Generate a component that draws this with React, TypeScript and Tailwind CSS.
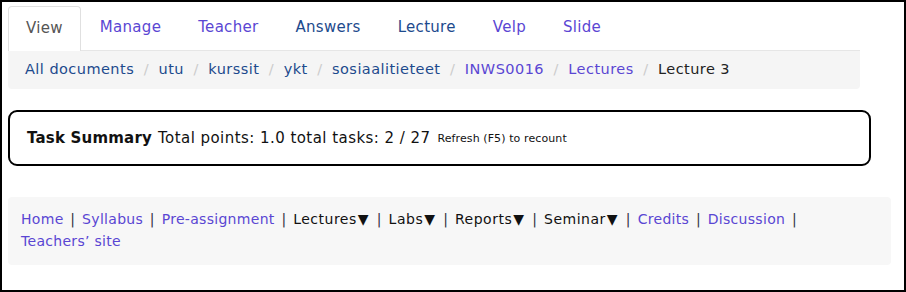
const PURPLE = "text-[#5a46d3]";
const BLUE = "text-[#1d4a8d]";

const TABS: { label: string; color: string }[] = [
  { label: "Manage", color: PURPLE },
  { label: "Teacher", color: PURPLE },
  { label: "Answers", color: BLUE },
  { label: "Lecture", color: BLUE },
  { label: "Velp", color: PURPLE },
  { label: "Slide", color: PURPLE },
];

const CRUMBS: { label: string; color: string }[] = [
  { label: "All documents", color: BLUE },
  { label: "utu", color: BLUE },
  { label: "kurssit", color: BLUE },
  { label: "ykt", color: BLUE },
  { label: "sosiaalitieteet", color: BLUE },
  { label: "INWS0016", color: PURPLE },
  { label: "Lectures", color: PURPLE },
];

type NavItem = { label: string; link: boolean };

const NAV: NavItem[] = [
  { label: "Home", link: true },
  { label: "Syllabus", link: true },
  { label: "Pre-assignment", link: true },
  { label: "Lectures", link: false },
  { label: "Labs", link: false },
  { label: "Reports", link: false },
  { label: "Seminar", link: false },
  { label: "Credits", link: true },
  { label: "Discussion", link: true },
];

export default function App() {
  return (
    <div className="w-[906px] h-[292px] box-border border-2 border-black bg-white pl-[6px] pt-[1px] font-['DejaVu_Sans',Verdana,sans-serif] text-[#222] tracking-[0.3px]">
      {/* Tabs */}
      <div className="w-[852px] flex items-end border-b border-[#e6e6e6] h-[48px]">
        <div className="h-[45px] px-[17px] flex items-center border border-b-0 border-[#e0e0e0] rounded-t-[4px] bg-white text-[15px] text-[#555] -mb-px pb-[1px]">
          View
        </div>
        {TABS.map((t) => (
          <div key={t.label} className={`h-[45px] px-[18px] ml-[1px] flex items-center text-[15px] ${t.color}`}>
            {t.label}
          </div>
        ))}
      </div>

      {/* Breadcrumb */}
      <div className="w-[852px] h-[38px] bg-[#f5f5f5] rounded-b-[4px] flex items-center pl-[17px] text-[14.5px] tracking-[0.45px]">
        {CRUMBS.map((c) => (
          <span key={c.label} className="flex items-center">
            <span className={c.color}>{c.label}</span>
            <span className="text-[#ccc] px-[9.5px]">/</span>
          </span>
        ))}
        <span className="text-[#222]">Lecture 3</span>
      </div>

      {/* Task summary */}
      <div className="mt-[21px] w-[863px] h-[56px] box-border border-2 border-black rounded-[9px] flex items-center pl-[17px] text-[15px] text-[#111]">
        <span className="font-bold tracking-[0.2px]">Task Summary</span>
        <span className="ml-[6px] tracking-[0.45px]">Total points: 1.0 total tasks: 2 / 27</span>
        <span className="ml-[7px] text-[11px] mt-[2px] tracking-[0.1px]">Refresh (F5) to recount</span>
      </div>

      {/* Footer nav */}
      <div className="mt-[31px] w-[883px] h-[68px] bg-[#f7f7f7] rounded-[4px] px-[13px] pt-[11px] text-[14px] leading-[22px]">
        {NAV.map((n) => (
          <span key={n.label}>
            {n.link ? (
              <span className={PURPLE}>{n.label}</span>
            ) : (
              <span className="text-[#111] tracking-[0.5px]">
                {n.label}
                <span className="ml-[1px] mr-[1px]">▼</span>
              </span>
            )}{" "}
            <span className="text-[#334] mx-[2px]">|</span>{" "}
          </span>
        ))}
        <span className={`${PURPLE} whitespace-nowrap`}>Teachers’ site</span>
      </div>
    </div>
  );
}
